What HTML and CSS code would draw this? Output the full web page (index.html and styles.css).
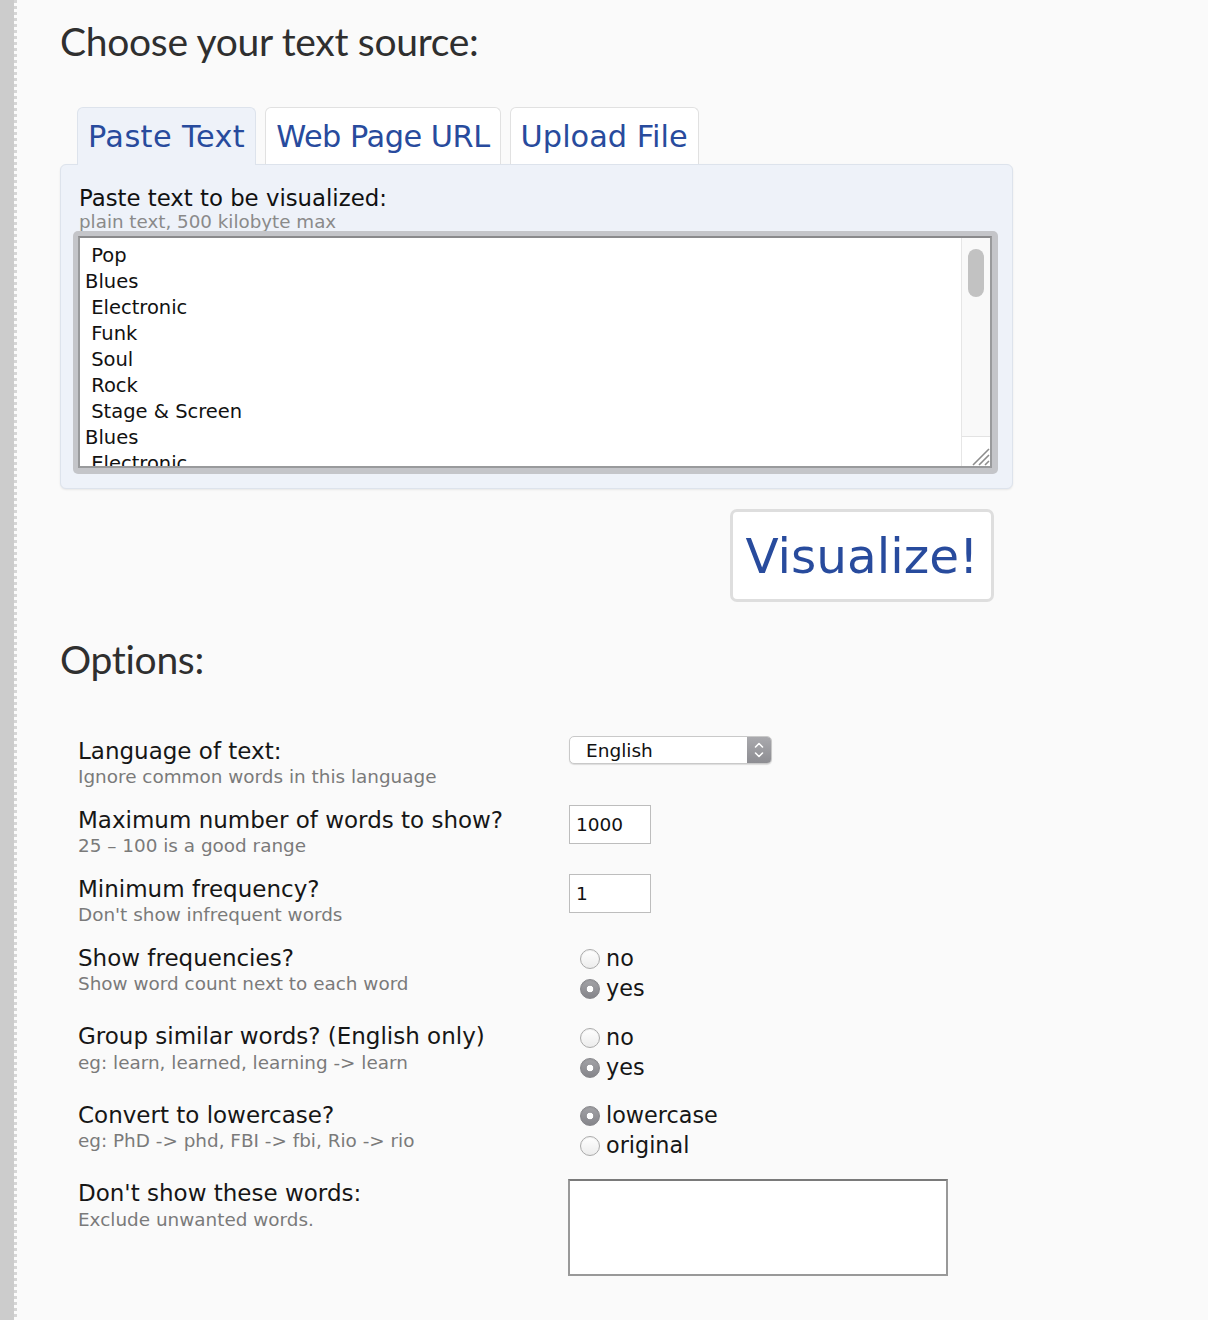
FILE: index.html
```html
<!DOCTYPE html>
<html lang="en">
<head>
<meta charset="utf-8">
<title>Choose your text source</title>
<link rel="stylesheet" href="styles.css">
</head>
<body>
<div class="page">
  <div class="strip"></div>
  <div class="dots"></div>
  <main class="main">
    <h1 class="title">Choose your text source:</h1>

    <div class="tabs">
      <div class="tab tab-active tab-paste">Paste Text</div>
      <div class="tab tab-url">Web Page URL</div>
      <div class="tab">Upload File</div>
    </div>

    <div class="panel">
      <div class="panel-label">Paste text to be visualized:</div>
      <div class="panel-sub">plain text, 500 kilobyte max</div>
      <div class="ta-ring">
        <div class="ta-box">
          <textarea class="ta" spellcheck="false"> Pop
Blues
 Electronic
 Funk
 Soul
 Rock
 Stage &amp; Screen
Blues
 Electronic
 Funk
 Soul
 Rock</textarea>
          <div class="vscroll">
            <div class="track"><div class="thumb"></div></div>
            <div class="corner">
              <svg width="22" height="22" viewBox="0 0 22 22">
                <path d="M5 21 L21 5 M11 21 L21 11 M17 21 L21 17" stroke="#8c8c8c" stroke-width="1.6" fill="none"/>
              </svg>
            </div>
          </div>
        </div>
      </div>
    </div>

    <div class="actions">
      <button class="visualize" type="button">Visualize!</button>
    </div>

    <h1 class="title options-title">Options:</h1>

    <div class="options">
      <div class="row">
        <div class="lbl">
          <div class="lbl-main">Language of text:</div>
          <div class="lbl-sub">Ignore common words in this language</div>
        </div>
        <div class="ctl">
          <div class="select">
            <span class="select-text">English</span>
            <span class="select-arrows">
              <svg width="24" height="26" viewBox="0 0 24 26">
                <path d="M8.5 10 L12 6.5 L15.5 10 M8.5 16 L12 19.5 L15.5 16" stroke="#fff" stroke-width="1.6" fill="none" stroke-linecap="round" stroke-linejoin="round"/>
              </svg>
            </span>
          </div>
        </div>
      </div>

      <div class="row">
        <div class="lbl">
          <div class="lbl-main">Maximum number of words to show?</div>
          <div class="lbl-sub">25 – 100 is a good range</div>
        </div>
        <div class="ctl">
          <input class="num" type="text" value="1000">
        </div>
      </div>

      <div class="row">
        <div class="lbl">
          <div class="lbl-main">Minimum frequency?</div>
          <div class="lbl-sub">Don't show infrequent words</div>
        </div>
        <div class="ctl">
          <input class="num" type="text" value="1">
        </div>
      </div>

      <div class="row">
        <div class="lbl">
          <div class="lbl-main">Show frequencies?</div>
          <div class="lbl-sub">Show word count next to each word</div>
        </div>
        <div class="ctl radios">
          <label class="radio"><input type="radio" name="freq"><span>no</span></label>
          <label class="radio"><input type="radio" name="freq" checked><span>yes</span></label>
        </div>
      </div>

      <div class="row">
        <div class="lbl">
          <div class="lbl-main">Group similar words? (English only)</div>
          <div class="lbl-sub">eg: learn, learned, learning -&gt; learn</div>
        </div>
        <div class="ctl radios">
          <label class="radio"><input type="radio" name="group"><span>no</span></label>
          <label class="radio"><input type="radio" name="group" checked><span>yes</span></label>
        </div>
      </div>

      <div class="row">
        <div class="lbl">
          <div class="lbl-main">Convert to lowercase?</div>
          <div class="lbl-sub">eg: PhD -&gt; phd, FBI -&gt; fbi, Rio -&gt; rio</div>
        </div>
        <div class="ctl radios">
          <label class="radio"><input type="radio" name="case" checked><span>lowercase</span></label>
          <label class="radio"><input type="radio" name="case"><span>original</span></label>
        </div>
      </div>

      <div class="row">
        <div class="lbl">
          <div class="lbl-main">Don't show these words:</div>
          <div class="lbl-sub">Exclude unwanted words.</div>
        </div>
        <div class="ctl">
          <textarea class="stopwords"></textarea>
        </div>
      </div>
    </div>
  </main>
</div>
</body>
</html>
```

FILE: styles.css
```css
html, body {
  margin: 0;
  padding: 0;
}

body {
  background: #fafafa;
  font-family: "DejaVu Sans", "Liberation Sans", sans-serif;
  color: #1a1a1a;
}

.page {
  display: flex;
  min-height: 1320px;
}

.strip {
  width: 14px;
  flex: none;
  background: #cccccc;
}

.dots {
  width: 3px;
  flex: none;
  background: repeating-linear-gradient(to bottom, #d6d6d6 0 3px, #fbfbfb 3px 6px);
}

.main {
  flex: 1;
  padding-left: 43px;
}

.title {
  margin: 17px 0 0;
  font-family: Lato, "Open Sans", sans-serif;
  font-weight: 400;
  font-size: 39px;
  letter-spacing: -0.3px;
  line-height: 48px;
  color: #2f2f2f;
}

/* tabs */
.tabs {
  display: flex;
  gap: 9px;
  margin: 42px 0 0 17px;
  height: 57px;
  position: relative;
  z-index: 1;
}

.tab {
  box-sizing: border-box;
  height: 57px;
  padding: 0 10px;
  border: 1px solid #e1e1e1;
  border-bottom: none;
  border-radius: 6px 6px 0 0;
  background: #ffffff;
  color: #284b9d;
  font-size: 30.4px;
  line-height: 58px;
  white-space: nowrap;
}

.tab-paste {
  letter-spacing: 0.4px;
}

.tab-url {
  letter-spacing: -0.5px;
}

.tab-active {
  background: #eef2f9;
  border-color: #dde3ec;
  height: 58px;
}

/* panel */
.panel {
  width: 953px;
  box-sizing: border-box;
  padding: 21px 14px 14px 12px;
  background: #eef2f9;
  border: 1px solid #dde3ec;
  border-radius: 6px;
  box-shadow: 0 1px 2px rgba(0, 0, 0, 0.08);
}

.panel-label {
  margin-left: 6px;
  font-size: 22.8px;
  line-height: 24px;
  color: #111;
}

.panel-sub {
  margin: 2px 0 0 6px;
  font-size: 18.3px;
  line-height: 20px;
  color: #8a8a8a;
}

.ta-ring {
  position: relative;
  margin-top: -1px;
  padding: 5px 6px 6px 5px;
  background: #c4c5c9;
  border-radius: 5px;
}

.ta-box {
  display: flex;
  height: 228px;
  border: 2px solid #999a9c;
  border-top-color: #8a8a8c;
  background: #fff;
}

.ta {
  flex: 1;
  margin: 0;
  border: none;
  outline: none;
  resize: none;
  overflow: hidden;
  padding: 5px 5px;
  background: #fff;
  font-family: "DejaVu Sans", sans-serif;
  font-size: 19.5px;
  line-height: 26px;
  color: #111;
}

.vscroll {
  width: 28px;
  flex: none;
  display: flex;
  flex-direction: column;
  border-left: 1px solid #e6e6e6;
  background: #f9f9f9;
}

.track {
  flex: 1;
  padding: 11px 5px 0 6px;
}

.thumb {
  width: 16px;
  height: 48px;
  border-radius: 8px;
  background: #c2c2c2;
}

.corner {
  height: 29px;
  border-top: 1px solid #e3e3e3;
  background: #fff;
  display: flex;
  align-items: flex-end;
  justify-content: flex-end;
}

.corner svg {
  display: block;
}

/* visualize button */
.actions {
  width: 953px;
  box-sizing: border-box;
  display: flex;
  justify-content: flex-end;
  padding-right: 19px;
  margin-top: 20px;
}

.visualize {
  width: 264px;
  height: 93px;
  box-sizing: border-box;
  border: 3px solid #dedede;
  border-radius: 7px;
  background: #fff;
  color: #284b9d;
  font-family: "DejaVu Sans", sans-serif;
  font-size: 48.5px;
  padding: 0;
  cursor: pointer;
}

.options-title {
  margin-top: 32.5px;
}

/* options */
.options {
  margin-top: 55px;
  padding-left: 18px;
  display: flex;
  flex-direction: column;
  gap: 18.5px;
}

.row {
  display: flex;
  align-items: flex-start;
}

.lbl {
  width: 491px;
  flex: none;
}

.lbl-main {
  font-size: 23px;
  line-height: 27.5px;
  color: #161616;
}

.lbl-sub {
  font-size: 18.4px;
  line-height: 23px;
  color: #7a7a7a;
}

.ctl {
  margin-top: -1.5px;
}

.select {
  box-sizing: border-box;
  width: 203px;
  height: 28px;
  display: flex;
  align-items: center;
  border: 1px solid #c9c9c9;
  border-radius: 5px;
  background: #fff;
  box-shadow: 0 1px 1px rgba(0, 0, 0, 0.12);
  overflow: hidden;
}

.select-text {
  flex: 1;
  padding-left: 16px;
  font-size: 18.5px;
  color: #111;
}

.select-arrows {
  width: 24px;
  height: 100%;
  display: flex;
  align-items: center;
  justify-content: center;
  background: linear-gradient(#a9a9ad, #8d8d92);
}

.num {
  box-sizing: border-box;
  width: 82px;
  height: 39px;
  margin: 0;
  padding: 0 6px;
  border: 1px solid #bdbdbd;
  background: #fff;
  font-family: "DejaVu Sans", sans-serif;
  font-size: 18.5px;
  color: #111;
  outline: none;
}

.radios {
  display: flex;
  flex-direction: column;
  margin-bottom: 1.5px;
}

.radio {
  display: flex;
  align-items: center;
  height: 30px;
  font-size: 22.3px;
  line-height: 30px;
  color: #161616;
}

.radio input {
  -webkit-appearance: none;
  appearance: none;
  box-sizing: border-box;
  width: 20px;
  height: 20px;
  margin: 2px 6px 0 11px;
  border-radius: 50%;
  border: 1px solid #aaaaaa;
  background: linear-gradient(#ffffff, #ececec);
  box-shadow: inset 0 1px 1px rgba(0, 0, 0, 0.06);
  flex: none;
}

.radio input:checked {
  border-color: #86868a;
  background:
    radial-gradient(circle at center, #ffffff 0 3px, transparent 3.6px),
    linear-gradient(#a3a3a7, #85858a);
}

.stopwords {
  display: block;
  box-sizing: border-box;
  width: 380px;
  height: 97px;
  margin: 0 0 0 -1px;
  border: 2px solid #999;
  border-top-color: #7a7a7a;
  background: #fff;
  resize: none;
  outline: none;
}
```
